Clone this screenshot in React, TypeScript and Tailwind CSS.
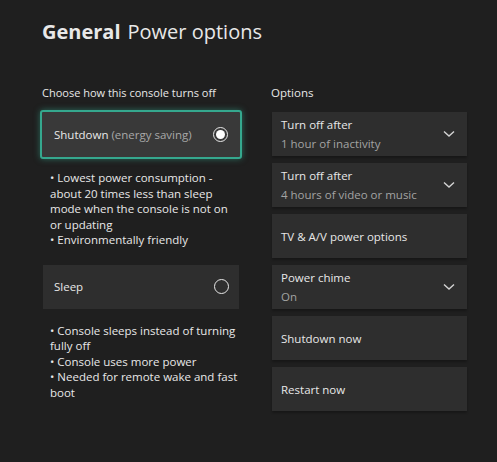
import React from 'react';

const Chevron = () => (
  <svg width="12" height="8" viewBox="0 0 12 8" className="shrink-0">
    <path d="M1 1.5 L6 6 L11 1.5" fill="none" stroke="#d4d4d4" strokeWidth="1.4" />
  </svg>
);

const Radio = ({ checked }: { checked?: boolean }) => (
  <span className="flex h-[15px] w-[15px] items-center justify-center rounded-full border-[1.5px] border-[#e8e8e8]">
    {checked && <span className="h-[9px] w-[9px] rounded-full bg-white" />}
  </span>
);

type Opt = { title: string; value?: string; dropdown?: boolean };

const options: Opt[] = [
  { title: 'Turn off after', value: '1 hour of inactivity', dropdown: true },
  { title: 'Turn off after', value: '4 hours of video or music', dropdown: true },
  { title: 'TV & A/V power options' },
  { title: 'Power chime', value: 'On', dropdown: true },
  { title: 'Shutdown now' },
  { title: 'Restart now' },
];

export default function App() {
  return (
    <div
      className="h-[462px] w-[497px] overflow-hidden bg-[#1f1f1f] text-[#e8e8e8]"
      style={{ fontFamily: '"Open Sans", "Noto Sans", sans-serif' }}
    >
      <h1 className="pl-[42px] pt-[18px] text-[20px] leading-[28px]">
        <span className="font-bold">General</span>
        <span className="ml-[7px] font-normal">Power options</span>
      </h1>

      <div className="mt-[39px] flex pl-[40px]">
        {/* left column */}
        <div className="w-[202px]">
          <div className="pl-[2px] text-[11px] leading-[16px]">Choose how this console turns off</div>
          <div className="mt-[9px] flex h-[49px] items-center justify-between rounded-[3px] border-2 border-[#35a88e] bg-[#393939] pl-[12px] pr-[12px] shadow-[0_0_6px_rgba(53,168,142,0.55)]">
            <span className="text-[11.5px]">
              Shutdown <span className="text-[#a8a8a8]">(energy saving)</span>
            </span>
            <Radio checked />
          </div>
          <div className="mt-[11px] pl-[10px] text-[11.5px] leading-[15.5px]">
            <div>• Lowest power consumption - about 20 times less than sleep mode when the console is not on or updating</div>
            <div>• Environmentally friendly</div>
          </div>
          <div className="mx-[3px] mt-[17px] flex h-[44px] items-center justify-between bg-[#2e2e2e] pl-[11px] pr-[10px]">
            <span className="text-[11.5px]">Sleep</span>
            <Radio />
          </div>
          <div className="mt-[14px] pl-[10px] pr-[2px] text-[11.5px] leading-[15.5px]">
            <div>• Console sleeps instead of turning fully off</div>
            <div>• Console uses more power</div>
            <div>• Needed for remote wake and fast boot</div>
          </div>
        </div>

        {/* right column */}
        <div className="ml-[29px] w-[196px]">
          <div className="text-[11.5px] leading-[16px]">Options</div>
          <div className="ml-[1px] mt-[11px] flex flex-col gap-[7px]">
            {options.map((o, i) => (
              <div
                key={i}
                className="flex h-[44px] items-center justify-between bg-[#2e2e2e] pl-[9px] pr-[12px] shadow-[0_2px_2px_rgba(0,0,0,0.25)]"
              >
                <div className="flex flex-col">
                  <span className="text-[11.5px] leading-[19px]">{o.title}</span>
                  {o.value && <span className="text-[11.5px] leading-[19px] text-[#a3a3a3]">{o.value}</span>}
                </div>
                {o.dropdown && <Chevron />}
              </div>
            ))}
          </div>
        </div>
      </div>
    </div>
  );
}
